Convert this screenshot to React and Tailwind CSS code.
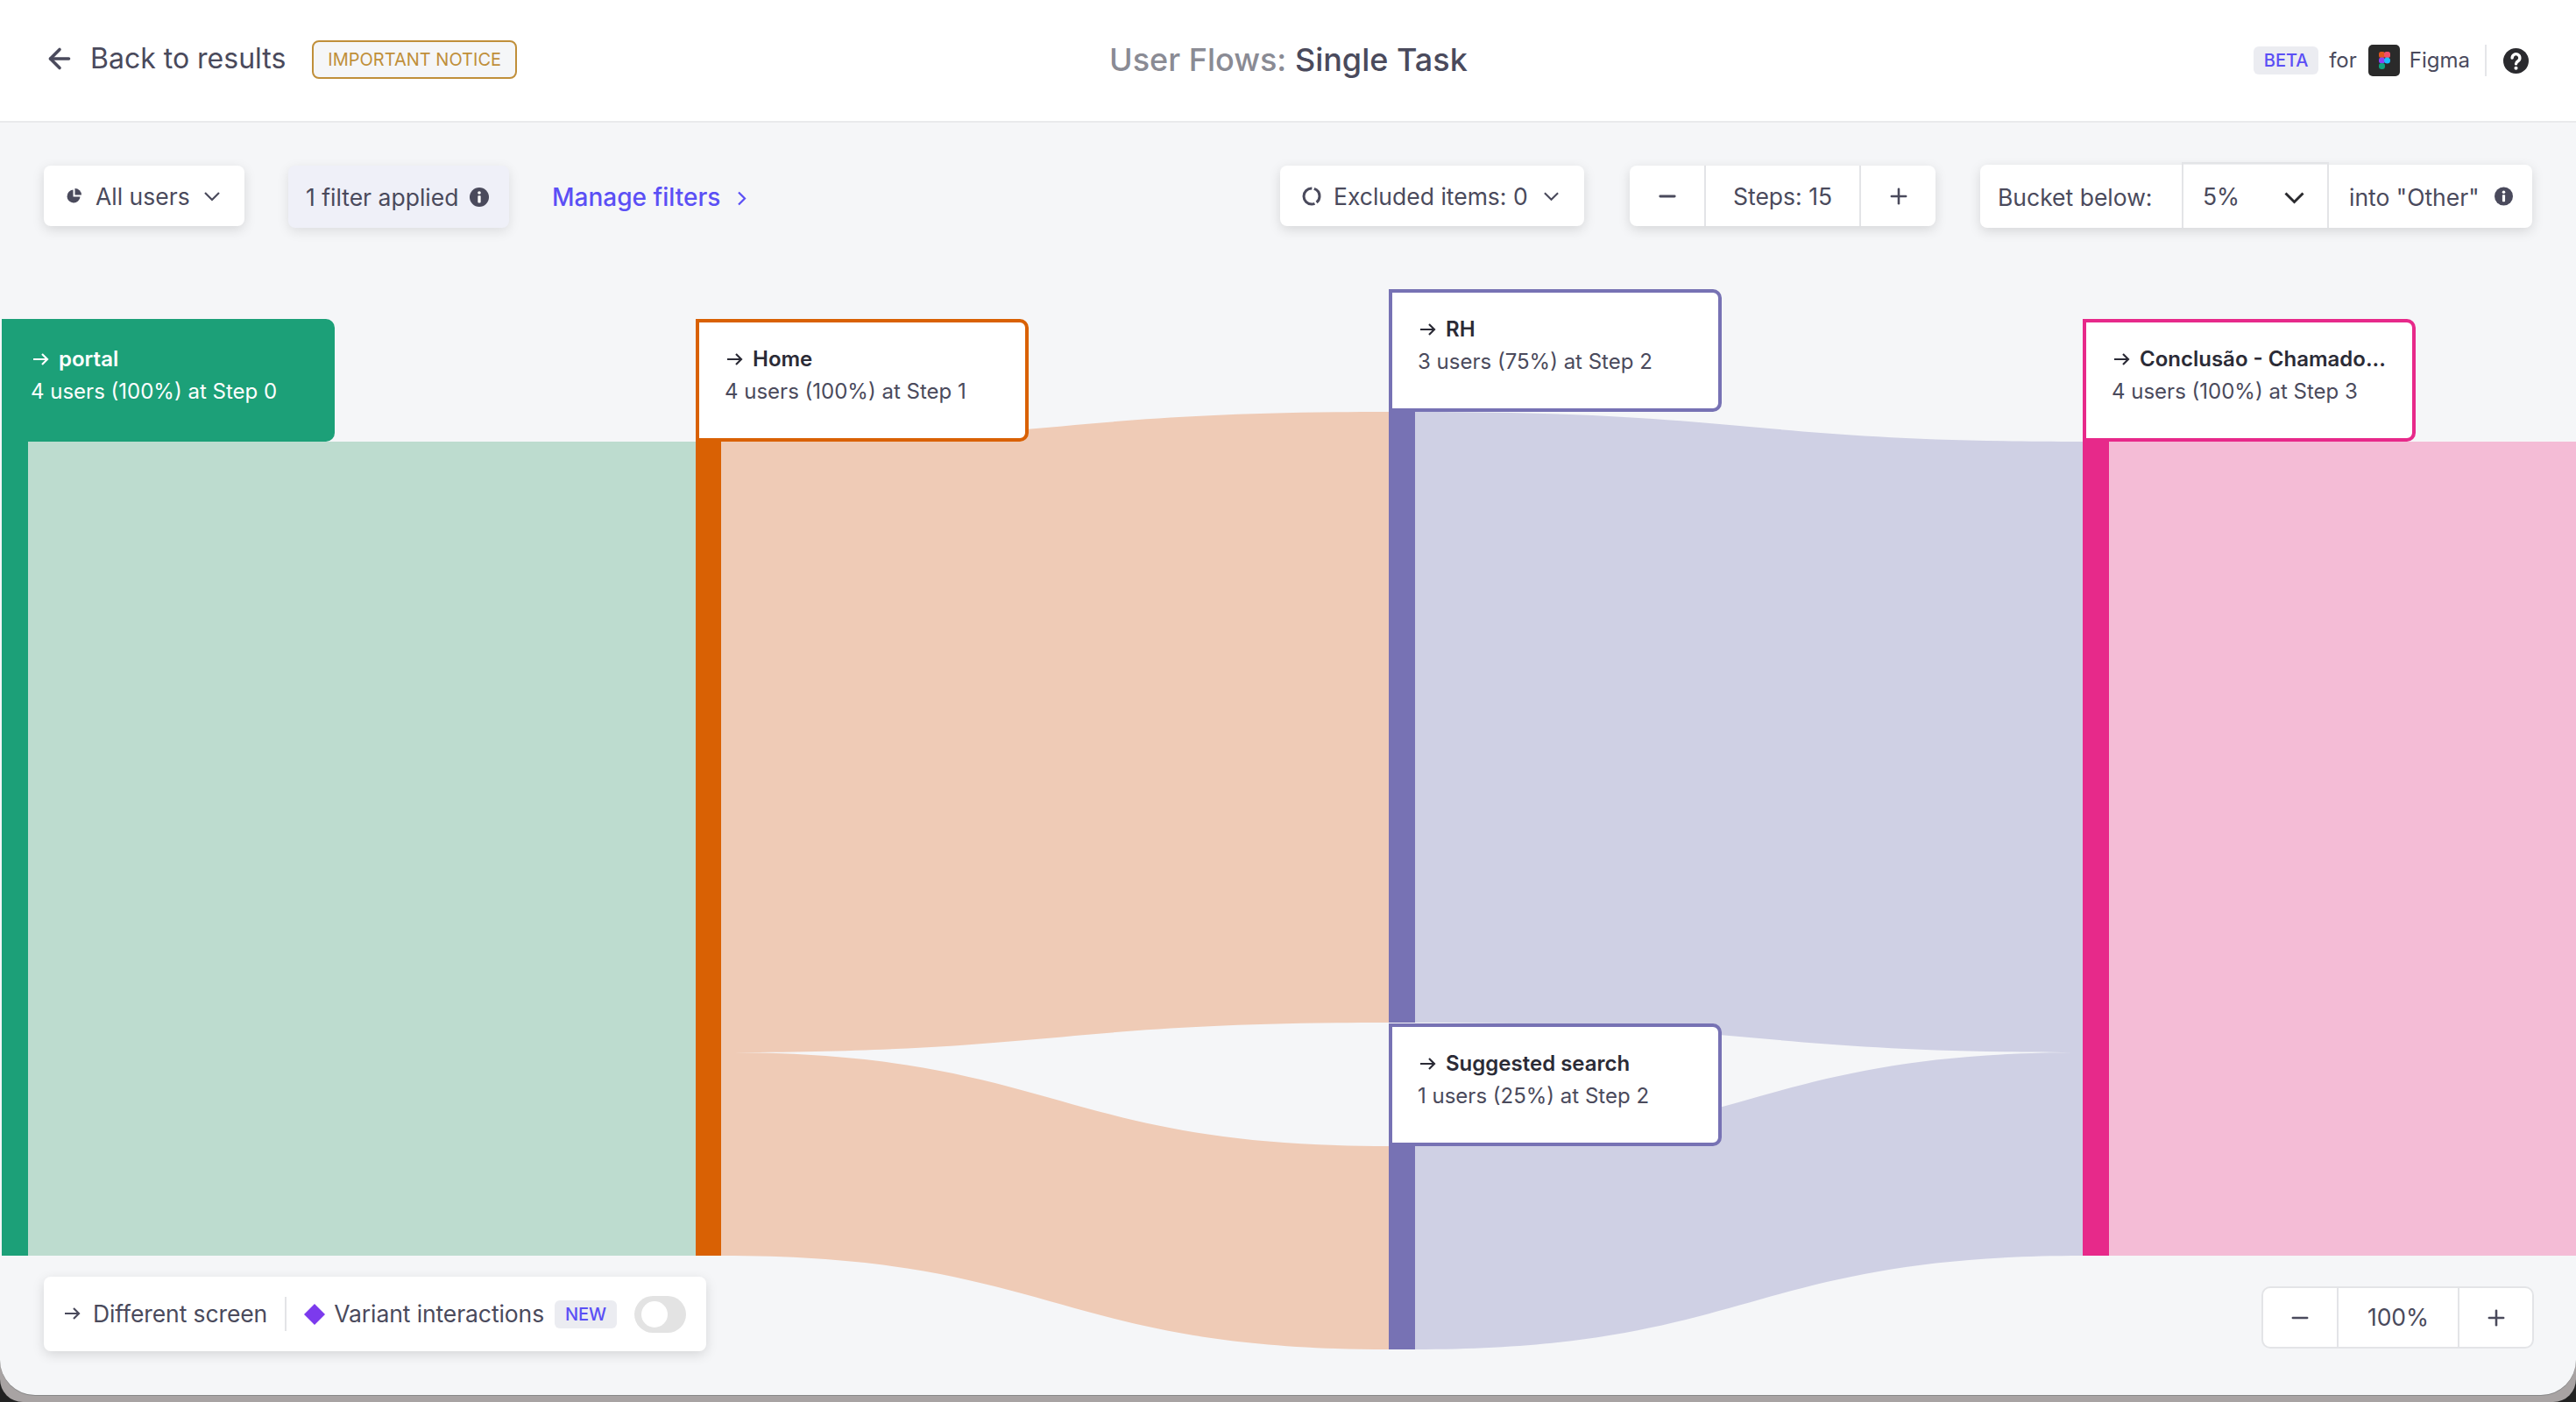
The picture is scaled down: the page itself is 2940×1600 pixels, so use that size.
import { ArrowLeft, Minus, Plus } from "lucide-react";

const font = "font-['Inter',sans-serif]";

const links = [
  { d: "M32 504 H794 V1433 H32 Z", fill: "#bddccf" },
  { d: "M823 504 C1204 504 1204 470 1585 470 L1585 1167 C1204 1167 1204 1201 823 1201 Z", fill: "#efcbb6" },
  { d: "M823 1201 C1204 1201 1204 1308 1585 1308 L1585 1540 C1204 1540 1204 1433 823 1433 Z", fill: "#efcbb6" },
  { d: "M1615 470 C1996 470 1996 504 2377 504 L2377 1201 C1996 1201 1996 1167 1615 1167 Z", fill: "#cfd0e4" },
  { d: "M1615 1308 C1996 1308 1996 1201 2377 1201 L2377 1433 C1996 1433 1996 1540 1615 1540 Z", fill: "#cfd0e4" },
  { d: "M2407 504 H2940 V1433 H2407 Z", fill: "#f4bcd6" },
];

const bars = [
  { x: 2, y: 504, w: 30, h: 929, fill: "#1ca078" },
  { x: 794, y: 504, w: 29, h: 929, fill: "#d96104" },
  { x: 1585, y: 470, w: 30, h: 697, fill: "#7772b4" },
  { x: 1585, y: 1308, w: 30, h: 232, fill: "#7772b4" },
  { x: 2377, y: 504, w: 30, h: 929, fill: "#e7298a" },
];

function InfoDot({ className }) {
  return (
    <svg viewBox="0 0 24 24" className={className}>
      <circle cx="12" cy="12" r="12" fill="#4a4a5c" />
      <circle cx="12" cy="6.5" r="2" fill="#fff" />
      <rect x="10.2" y="10" width="3.6" height="9" rx="1" fill="#fff" />
    </svg>
  );
}

function Arrow({ className }) {
  return (
    <svg viewBox="0 0 19 14" fill="none" stroke="currentColor" strokeWidth="2.2" className={className}>
      <path d="M1 7 H17 M11 1 L17 7 L11 13" />
    </svg>
  );
}

function Chev({ className }) {
  return (
    <svg viewBox="0 0 20 12" fill="none" stroke="currentColor" strokeWidth="2.2" className={className}>
      <path d="M2 2 L10 10 L18 2" />
    </svg>
  );
}

function NodeCard({ className, title, sub, filled }) {
  return (
    <div className={`absolute w-[380px] h-[140px] rounded-r-[10px] flex flex-col justify-center pb-[12px] ${filled ? "pl-[33px]" : "pl-[29px]"} ${className}`}>
      <div className={`flex items-center gap-[11px] text-[24px] leading-[37px] font-semibold ${filled ? "text-white" : "text-[#2b2b36]"}`}>
        <Arrow className="ml-[2px] w-[19px] h-[14px] shrink-0" />
        <span>{title}</span>
      </div>
      <div className={`text-[24px] leading-[37px] ${filled ? "text-white" : "text-[#4a4a5c]"}`}>{sub}</div>
    </div>
  );
}

export default function App() {
  return (
    <div className={`${font} w-[2940px] h-[1600px] bg-[#222222] overflow-hidden`}>
      <div className="h-[1600px] bg-[#a8a3a3] rounded-b-[26px]">
        <div className="relative h-[1592px] bg-[#f5f6f8] rounded-b-[40px] shadow-[0_1px_0_#888888] flex flex-col overflow-hidden text-[#4a4a5c]">
          <svg className="absolute inset-0" width="2940" height="1600" viewBox="0 0 2940 1600">
            {links.map((l, i) => (
              <path key={i} d={l.d} fill={l.fill} />
            ))}
            {bars.map((b, i) => (
              <rect key={i} x={b.x} y={b.y} width={b.w} height={b.h} fill={b.fill} />
            ))}
          </svg>

          <NodeCard className="left-[2px] top-[364px] bg-[#1ca078]" title="portal" sub="4 users (100%) at Step 0" filled />
          <NodeCard className="left-[794px] top-[364px] bg-white border-[4px] border-[#d96104]" title="Home" sub="4 users (100%) at Step 1" />
          <NodeCard className="left-[1585px] top-[330px] bg-white border-[4px] border-[#7772b4]" title="RH" sub="3 users (75%) at Step 2" />
          <NodeCard className="left-[1585px] top-[1168px] bg-white border-[4px] border-[#7772b4]" title="Suggested search" sub="1 users (25%) at Step 2" />
          <NodeCard className="left-[2377px] top-[364px] bg-white border-[4px] border-[#e7298a]" title="Conclusão - Chamado..." sub="4 users (100%) at Step 3" />

          <header className="relative h-[140px] shrink-0 bg-white border-b-2 border-[#e9eaec] flex items-center justify-between pl-[52px] pr-[54px]">
            <div className="flex items-center -mt-[2px]">
              <ArrowLeft size={36} strokeWidth={2.4} className="-ml-[2px] -mt-[3px]" />
              <span className="ml-[17px] -mt-[3px] text-[32px]">Back to results</span>
              <span className="ml-[30px] h-[44px] px-[16px] flex items-center rounded-[8px] border-2 border-[#c08f3a] bg-[#f5f6f8] text-[#c08f3a] text-[20px]">
                IMPORTANT NOTICE
              </span>
            </div>
            <div className="absolute left-[1266px] top-[44px] text-[36px] leading-[48px] font-medium">
              <span className="text-[#8a8b94]">User Flows: </span>
              <span>Single Task</span>
            </div>
            <div className="flex items-center text-[24px]">
              <span className="h-[32px] w-[74px] flex items-center justify-center rounded-[6px] bg-[#ebecf1] text-[#5b4ff5] text-[20px] font-medium">BETA</span>
              <span className="ml-[12px]">for</span>
              <svg viewBox="0 0 36 36" className="ml-[13px] w-[36px] h-[36px]">
                <rect width="36" height="36" rx="5" fill="#2a2a2a" />
                <rect x="12" y="8" width="7" height="7" rx="2.5" fill="#e2571e" />
                <rect x="18" y="8" width="7" height="7" rx="2.5" fill="#f24e6b" />
                <rect x="12" y="14.5" width="7" height="7" rx="3" fill="#8b3ff5" />
                <circle cx="21.5" cy="18" r="3.5" fill="#1abcfe" />
                <rect x="12" y="21" width="7" height="7" rx="3.2" fill="#0fa37f" />
              </svg>
              <span className="ml-[11px]">Figma</span>
              <span className="ml-[17px] w-[2px] h-[36px] bg-[#e5e6e9]" />
              <svg viewBox="0 0 24 24" className="ml-[19px] w-[29px] h-[29px]">
                <circle cx="12" cy="12" r="12" fill="#2a2a2e" />
                <path d="M8.4 9.2a3.6 3.6 0 1 1 5.5 3c-1.3.8-1.9 1.3-1.9 2.6" fill="none" stroke="#fff" strokeWidth="2.8" strokeLinecap="round" />
                <circle cx="12" cy="18.8" r="1.7" fill="#fff" />
              </svg>
            </div>
          </header>

          <div className="relative mt-[49px] px-[50px] flex items-start text-[26.5px]">
            <div className="h-[69px] w-[229px] flex items-center pl-[26px] bg-white rounded-[8px] shadow-[0_4px_14px_rgba(0,0,0,0.13)]">
              <svg viewBox="0 0 17 17" className="w-[17px] h-[17px]">
                <path d="M7.5 1.5a7.5 7.5 0 1 0 8 8H7.5Z" fill="#4a4a5c" />
                <path d="M9.5 0A7.5 7.5 0 0 1 17 7.5H9.5Z" fill="#4a4a5c" />
              </svg>
              <span className="ml-[16px] mt-[3px]">All users</span>
              <Chev className="ml-[15px] w-[20px] h-[12px]" />
            </div>
            <div className="ml-[50px] h-[71px] w-[252px] flex items-center pl-[20px] bg-[#eff0f8] rounded-[8px] shadow-[0_4px_14px_rgba(0,0,0,0.1)]">
              <span className="mt-[3px]">1 filter applied</span>
              <InfoDot className="ml-[13px] w-[22px] h-[22px]" />
            </div>
            <div className="ml-[49px] h-[69px] flex items-center text-[#5b4ff5] text-[28px] font-medium">
              <span className="mt-[3px]">Manage filters</span>
              <svg viewBox="0 0 11 17" fill="none" stroke="currentColor" strokeWidth="2.2" className="ml-[19px] mt-[5px] w-[11px] h-[17px]">
                <path d="M2 1.5 L9 8.5 L2 15.5" />
              </svg>
            </div>

            <div className="ml-auto h-[69px] w-[347px] flex items-center pl-[25px] bg-white rounded-[8px] shadow-[0_4px_14px_rgba(0,0,0,0.13)]">
              <svg viewBox="0 0 22 22" className="w-[22px] h-[22px]">
                <circle cx="11" cy="11" r="9" fill="none" stroke="#4a4a5c" strokeWidth="3" strokeDasharray="8 2.5 32 2.5 11.5 0" />
              </svg>
              <span className="ml-[14px] mt-[3px]">Excluded items: 0</span>
              <Chev className="ml-[17px] w-[19px] h-[12px]" />
            </div>

            <div className="ml-[52px] h-[69px] w-[349px] flex items-center bg-white rounded-[8px] shadow-[0_4px_14px_rgba(0,0,0,0.13)]">
              <div className="w-[87px] h-full flex items-center justify-center border-r-2 border-[#e3e4e7]">
                <Minus size={28} strokeWidth={2.5} />
              </div>
              <div className="flex-1 text-center mt-[3px]">Steps: 15</div>
              <div className="w-[87px] h-full flex items-center justify-center border-l-2 border-[#e3e4e7]">
                <Plus size={28} strokeWidth={2.2} />
              </div>
            </div>

            <div className="ml-[51px] -mt-[1px] h-[72px] w-[630px] flex items-center bg-white rounded-[8px] shadow-[0_4px_14px_rgba(0,0,0,0.13)]">
              <div className="w-[230px] pl-[20px] mt-[3px]">Bucket below:</div>
              <div className="w-[168px] h-[75px] -mt-[3px] flex items-center justify-between pl-[22px] pr-[26px] border-x-2 border-t-2 border-[#e3e4e7]">
                <span className="mt-[3px]">5%</span>
                <svg viewBox="0 0 23 14" fill="none" stroke="#2a2a2e" strokeWidth="3" className="mt-[4px] w-[23px] h-[14px]">
                  <path d="M1.5 1.5 L11.5 11.5 L21.5 1.5" />
                </svg>
              </div>
              <div className="flex-1 flex items-center pl-[23px]">
                <span className="mt-[3px]">into "Other"</span>
                <InfoDot className="ml-[17px] w-[21px] h-[22px]" />
              </div>
            </div>
          </div>

          <div className="relative mt-auto mb-[50px] pl-[50px] pr-[48px] flex items-end justify-between text-[26.5px]">
            <div className="h-[85px] w-[756px] flex items-center pl-[23px] bg-white rounded-[8px] shadow-[0_4px_14px_rgba(0,0,0,0.13)]">
              <Arrow className="w-[19px] h-[14px] -mt-[1px]" />
              <span className="ml-[14px] -tracking-[0.1px]">Different screen</span>
              <span className="ml-[20px] w-[2px] h-[39px] bg-[#e3e4e7]" />
              <svg viewBox="0 0 24 24" className="ml-[20px] w-[24px] h-[24px]">
                <path d="M12 0 L24 12 L12 24 L0 12 Z" fill="#7c3aed" />
              </svg>
              <span className="ml-[10px] -tracking-[0.1px]">Variant interactions</span>
              <span className="ml-[12px] h-[32px] w-[71px] flex items-center justify-center rounded-[6px] bg-[#ebecf1] text-[#5b4ff5] text-[20px] font-medium">NEW</span>
              <div className="ml-[20px] w-[59px] h-[42px] py-[6px] pl-[8px] rounded-full bg-[#e3e3e3]">
                <div className="w-[30px] h-[30px] rounded-full bg-white" />
              </div>
            </div>
            <div className="h-[71px] w-[311px] flex items-center bg-white rounded-[10px] border-2 border-[#e3e4e7] mb-[3px]">
              <div className="w-[86px] h-full flex items-center justify-center border-r-2 border-[#e3e4e7]">
                <Minus size={28} strokeWidth={2.2} />
              </div>
              <div className="flex-1 text-center">100%</div>
              <div className="w-[85px] h-full flex items-center justify-center border-l-2 border-[#e3e4e7]">
                <Plus size={28} strokeWidth={2.2} />
              </div>
            </div>
          </div>
        </div>
      </div>
    </div>
  );
}
